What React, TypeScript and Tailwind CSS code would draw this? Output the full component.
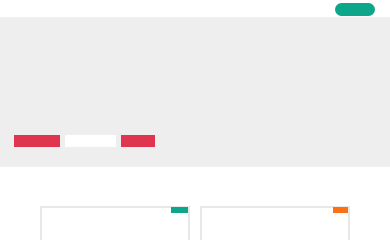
export default function App() {
  return (
    <div className="min-h-screen bg-white font-['Liberation_Sans',sans-serif]">
      {/* Header */}
      <header className="flex h-[17px] items-start justify-end bg-white pr-[15px] pt-[3px]">
        <button className="h-[13px] w-[40px] rounded-full bg-[#0ca68a]" aria-label="Menu" />
      </header>

      {/* Hero */}
      <section className="flex h-[150px] flex-col justify-end bg-[#eeeeee] px-[14px] pb-[20px]">
        <div className="flex gap-[5px]">
          <button className="h-[12px] w-[46px] bg-[#e0354e]" />
          <button className="h-[12px] w-[51px] bg-white" />
          <button className="h-[12px] w-[34px] bg-[#e0354e]" />
        </div>
      </section>

      {/* Cards */}
      <section className="flex justify-center gap-[10px] pt-[39px]">
        <div className="flex h-[60px] w-[150px] justify-end border-x-2 border-t-2 border-[#e8e8e8] bg-white">
          <span className="mt-[-1px] h-[6px] w-[17px] bg-[#0ca68a]" />
        </div>
        <div className="flex h-[60px] w-[150px] justify-end border-x-2 border-t-2 border-[#e8e8e8] bg-white">
          <span className="mt-[-1px] h-[6px] w-[15px] bg-[#ff6f14]" />
        </div>
      </section>
    </div>
  );
}
